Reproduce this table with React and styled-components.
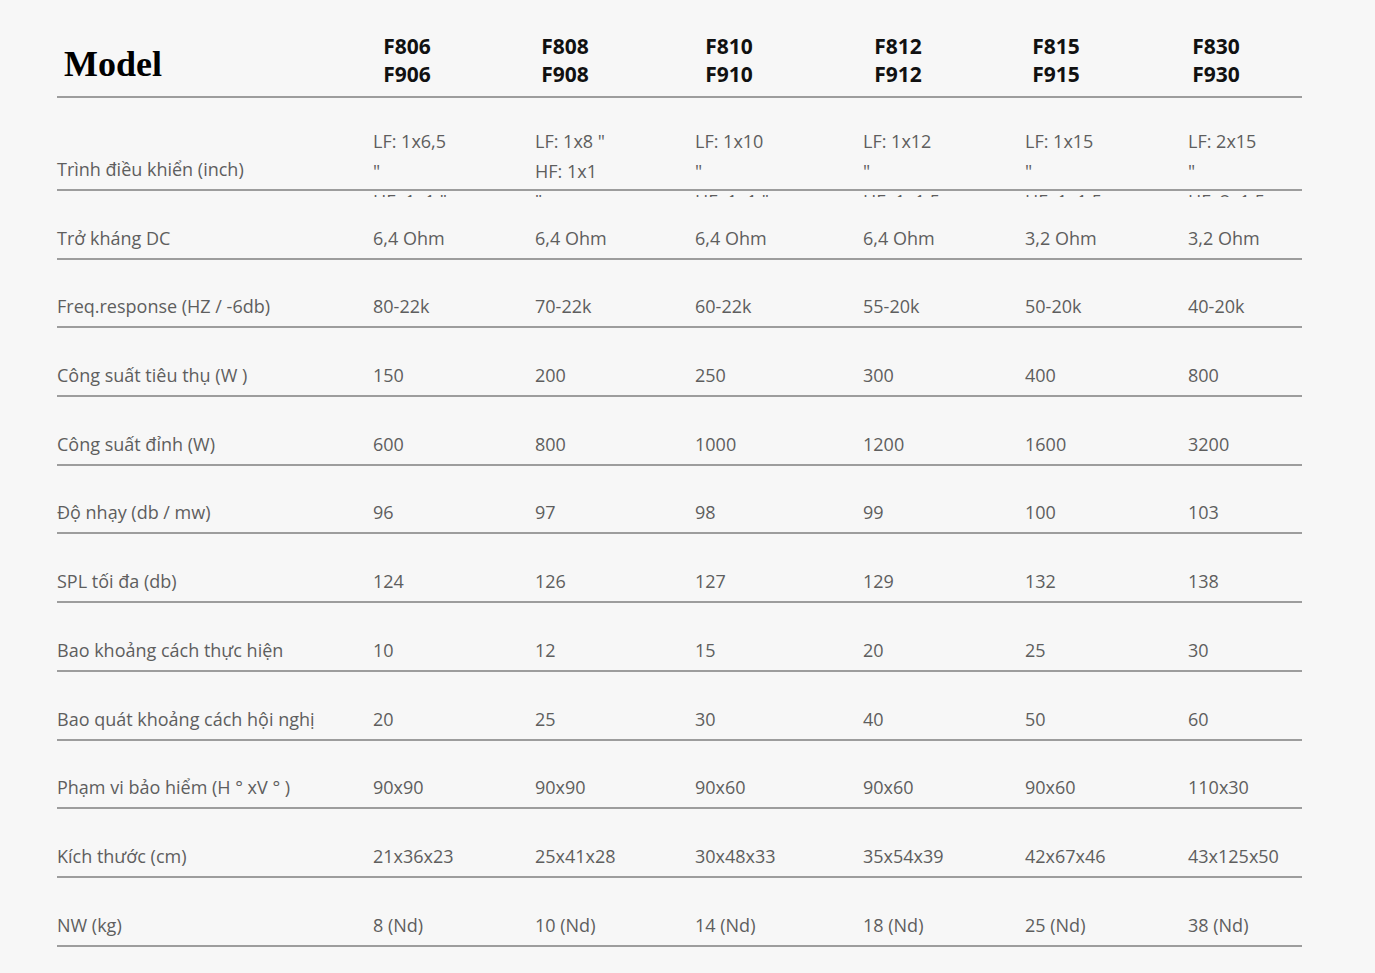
import React from 'react'
import styled, { createGlobalStyle } from 'styled-components';

const GlobalStyle = createGlobalStyle`
	html, body {
		margin: 0;
		padding: 0;
		background: #f7f7f7;
	}
`

// [top line, bottom line, width of the centred header box]
const models = [
	['F806', 'F906', 68],
	['F808', 'F908', 60],
	['F810', 'F910', 68],
	['F812', 'F912', 70],
	['F815', 'F915', 62],
	['F830', 'F930', 56],
];

const drivers = [
	['LF: 1x6,5', '"', 'HF: 1x1 "'],
	['LF: 1x8 "', 'HF: 1x1', '"'],
	['LF: 1x10', '"', 'HF: 1x1 "'],
	['LF: 1x12', '"', 'HF: 1x1,5'],
	['LF: 1x15', '"', 'HF: 1x1,5'],
	['LF: 2x15', '"', 'HF: 2x1,5'],
];

const specs = [
	['Trở kháng DC', ['6,4 Ohm', '6,4 Ohm', '6,4 Ohm', '6,4 Ohm', '3,2 Ohm', '3,2 Ohm']],
	['Freq.response (HZ / -6db)', ['80-22k', '70-22k', '60-22k', '55-20k', '50-20k', '40-20k']],
	['Công suất tiêu thụ (W )', ['150', '200', '250', '300', '400', '800']],
	['Công suất đỉnh (W)', ['600', '800', '1000', '1200', '1600', '3200']],
	['Độ nhạy (db / mw)', ['96', '97', '98', '99', '100', '103']],
	['SPL tối đa (db)', ['124', '126', '127', '129', '132', '138']],
	['Bao khoảng cách thực hiện', ['10', '12', '15', '20', '25', '30']],
	['Bao quát khoảng cách hội nghị', ['20', '25', '30', '40', '50', '60']],
	['Phạm vi bảo hiểm (H ° xV ° )', ['90x90', '90x90', '90x60', '90x60', '90x60', '110x30']],
	['Kích thước (cm)', ['21x36x23', '25x41x28', '30x48x33', '35x54x39', '42x67x46', '43x125x50']],
	['NW (kg)', ['8 (Nd)', '10 (Nd)', '14 (Nd)', '18 (Nd)', '25 (Nd)', '38 (Nd)']],
];

const StyledTable = styled.div`
	width: 1245px;
	margin-left: 57px;
	font-family: "Open Sans", "Noto Sans", sans-serif;
	color: #5e5e5e;
`

const StyledRow = styled.div`
	display: grid;
	grid-template-columns: 316px 162px 160px 168px 162px 163px 114px;
	grid-template-rows: ${props => props.height}px;
	align-items: end;
	border-bottom: 2px solid #9d9d9d;
`

const StyledModelTitle = styled.div`
	font-family: "Liberation Serif", "Times New Roman", serif;
	font-weight: bold;
	font-size: 36px;
	line-height: 40px;
	color: #000;
	padding: 0 0 12px 7px;
`

const StyledModelName = styled.div`
	width: ${props => props.width}px;
	padding-bottom: 8px;
	text-align: center;
	font-size: 21px;
	font-weight: 700;
	line-height: 28px;
	color: #111;
`

const StyledLabel = styled.div`
	font-size: 18px;
	line-height: 24px;
	padding-bottom: 8px;
	white-space: nowrap;
`

const StyledValue = styled(StyledLabel)``

const StyledDriver = styled.div`
	align-self: start;
	margin-top: 28px;
	height: 71px;
	overflow: hidden;
	font-size: 18px;
	line-height: 30px;
	white-space: nowrap;
	span {
		display: block;
	}
`

export default function App() {
	return (
		<>
			<GlobalStyle />
			<StyledTable>
				<StyledRow height={96}>
					<StyledModelTitle>Model</StyledModelTitle>
					{models.map(([top, bottom, width]) => (
						<StyledModelName key={top} width={width}>
							{top}<br />{bottom}
						</StyledModelName>
					))}
				</StyledRow>
				<StyledRow height={91}>
					<StyledLabel>Trình điều khiển (inch)</StyledLabel>
					{drivers.map((lines, i) => (
						<StyledDriver key={i}>
							{lines.map((line, j) => <span key={j}>{line}</span>)}
						</StyledDriver>
					))}
				</StyledRow>
				{specs.map(([label, values]) => (
					<StyledRow key={label} height={66.7}>
						<StyledLabel>{label}</StyledLabel>
						{values.map((v, i) => <StyledValue key={i}>{v}</StyledValue>)}
					</StyledRow>
				))}
			</StyledTable>
		</>
	)
}
